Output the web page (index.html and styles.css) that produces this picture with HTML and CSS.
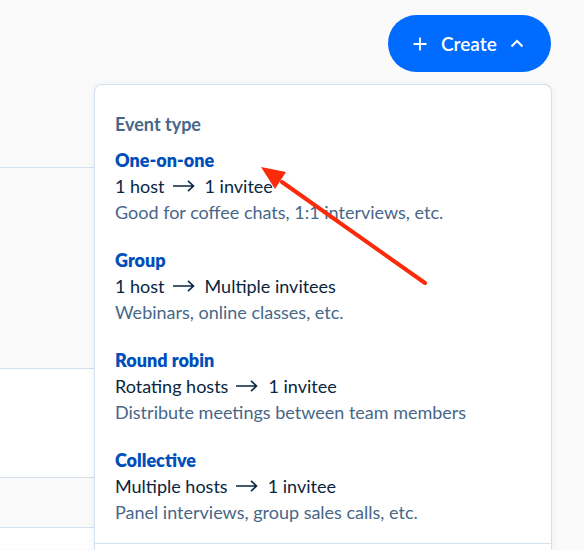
FILE: index.html
```html
<!DOCTYPE html>
<html>
<head>
<meta charset="utf-8">
<link rel="stylesheet" href="styles.css">
</head>
<body>
<div class="page">
  <div class="backdrop">
    <div class="bg-top"></div>
    <div class="bg-gray"></div>
    <div class="bg-white"></div>
    <div class="bg-gray bg-short"></div>
    <div class="bg-white bg-last"></div>
  </div>

  <button class="create-btn">
    <svg class="plus" width="14" height="14" viewBox="0 0 14 14"><path d="M7 0.5V13.5M0.5 7H13.5" stroke="#fff" stroke-width="1.8" fill="none"/></svg>
    <span>Create</span>
    <svg class="chev" width="14" height="9" viewBox="0 0 14 9"><path d="M1.5 7.5L7 2L12.5 7.5" stroke="#fff" stroke-width="2" fill="none"/></svg>
  </button>

  <div class="menu">
    <div class="menu-head">Event type</div>
    <div class="item">
      <div class="title">One-on-one</div>
      <div class="line">1 host<svg class="arr" width="22" height="12" viewBox="0 0 22 12"><path d="M0 6H20.5M15 0.8L20.5 6L15 11.2" stroke="#0a2540" stroke-width="1.6" fill="none"/></svg>1 invitee</div>
      <div class="desc">Good for coffee chats, 1:1 interviews, etc.</div>
    </div>
    <div class="item">
      <div class="title">Group</div>
      <div class="line">1 host<svg class="arr" width="22" height="12" viewBox="0 0 22 12"><path d="M0 6H20.5M15 0.8L20.5 6L15 11.2" stroke="#0a2540" stroke-width="1.6" fill="none"/></svg>Multiple invitees</div>
      <div class="desc">Webinars, online classes, etc.</div>
    </div>
    <div class="item">
      <div class="title">Round robin</div>
      <div class="line">Rotating hosts<svg class="arr" width="22" height="12" viewBox="0 0 22 12"><path d="M0 6H20.5M15 0.8L20.5 6L15 11.2" stroke="#0a2540" stroke-width="1.6" fill="none"/></svg>1 invitee</div>
      <div class="desc">Distribute meetings between team members</div>
    </div>
    <div class="item">
      <div class="title">Collective</div>
      <div class="line">Multiple hosts<svg class="arr" width="22" height="12" viewBox="0 0 22 12"><path d="M0 6H20.5M15 0.8L20.5 6L15 11.2" stroke="#0a2540" stroke-width="1.6" fill="none"/></svg>1 invitee</div>
      <div class="desc">Panel interviews, group sales calls, etc.</div>
    </div>
    <div class="menu-foot"></div>
  </div>

  <svg class="annot" width="584" height="550" viewBox="0 0 584 550">
    <line x1="425" y1="283" x2="282" y2="182" stroke="#fa2a0a" stroke-width="4" stroke-linecap="round"/>
    <polygon points="261,167 286,172 275,189" fill="#fa2a0a"/>
  </svg>
</div>
</body>
</html>
```

FILE: styles.css
```css
* { box-sizing: border-box; }
html, body { margin: 0; padding: 0; }
body {
  background: #fafafa;
  font-family: Lato, "Open Sans", sans-serif;
  width: 584px;
  height: 550px;
  overflow: hidden;
}
.page {
  position: relative;
  width: 584px;
  height: 550px;
  overflow: hidden;
}
.backdrop {
  width: 300px;
  display: flex;
  flex-direction: column;
}
.bg-top { height: 168px; background: #fafafa; border-bottom: 1px solid #d4e0ed; }
.bg-gray { height: 201px; background: #fafafa; border-bottom: 1px solid #d4e0ed; }
.bg-white { height: 109px; background: #ffffff; border-bottom: 1px solid #d4e0ed; }
.bg-short { height: 50px; }
.bg-last { height: 21px; border-bottom: none; }

.create-btn {
  position: absolute;
  left: 388px;
  top: 15px;
  width: 163px;
  height: 57px;
  border: none;
  border-radius: 29px;
  background: #006bff;
  color: #fff;
  font-family: Lato, sans-serif;
  font-size: 19px;
  font-weight: 600;
  display: flex;
  align-items: center;
  padding: 0 0 0 25px;
}
.create-btn .plus { margin-right: 14px; }
.create-btn .chev { margin-left: 13px; }

.menu {
  position: absolute;
  left: 94px;
  top: 84px;
  width: 458px;
  height: 466px;
  background: #fff;
  border: 1px solid #d4e0ed;
  border-bottom: none;
  border-radius: 8px 8px 0 0;
  box-shadow: 0 1px 8px rgba(0, 0, 0, 0.06);
  padding: 26px 0 0 20px;
}
.menu-head {
  color: #476788;
  font-size: 18px;
  font-weight: 700;
  line-height: 26px;
  margin-bottom: 10px;
}
.item { margin-bottom: 22px; }
.title {
  color: #004eba;
  font-size: 18px;
  font-weight: 800;
  line-height: 26px;
}
.line {
  color: #0a2540;
  font-size: 18px;
  line-height: 26px;
  display: flex;
  align-items: center;
}
.arr { margin: 0 10px 0 8px; }
.desc {
  color: #476788;
  font-size: 18px;
  line-height: 26px;
}
.menu-foot {
  position: absolute;
  left: 0;
  right: 0;
  top: 458px;
  border-top: 1px solid #d4e0ed;
}
.annot {
  position: absolute;
  left: 0;
  top: 0;
  pointer-events: none;
}
```
